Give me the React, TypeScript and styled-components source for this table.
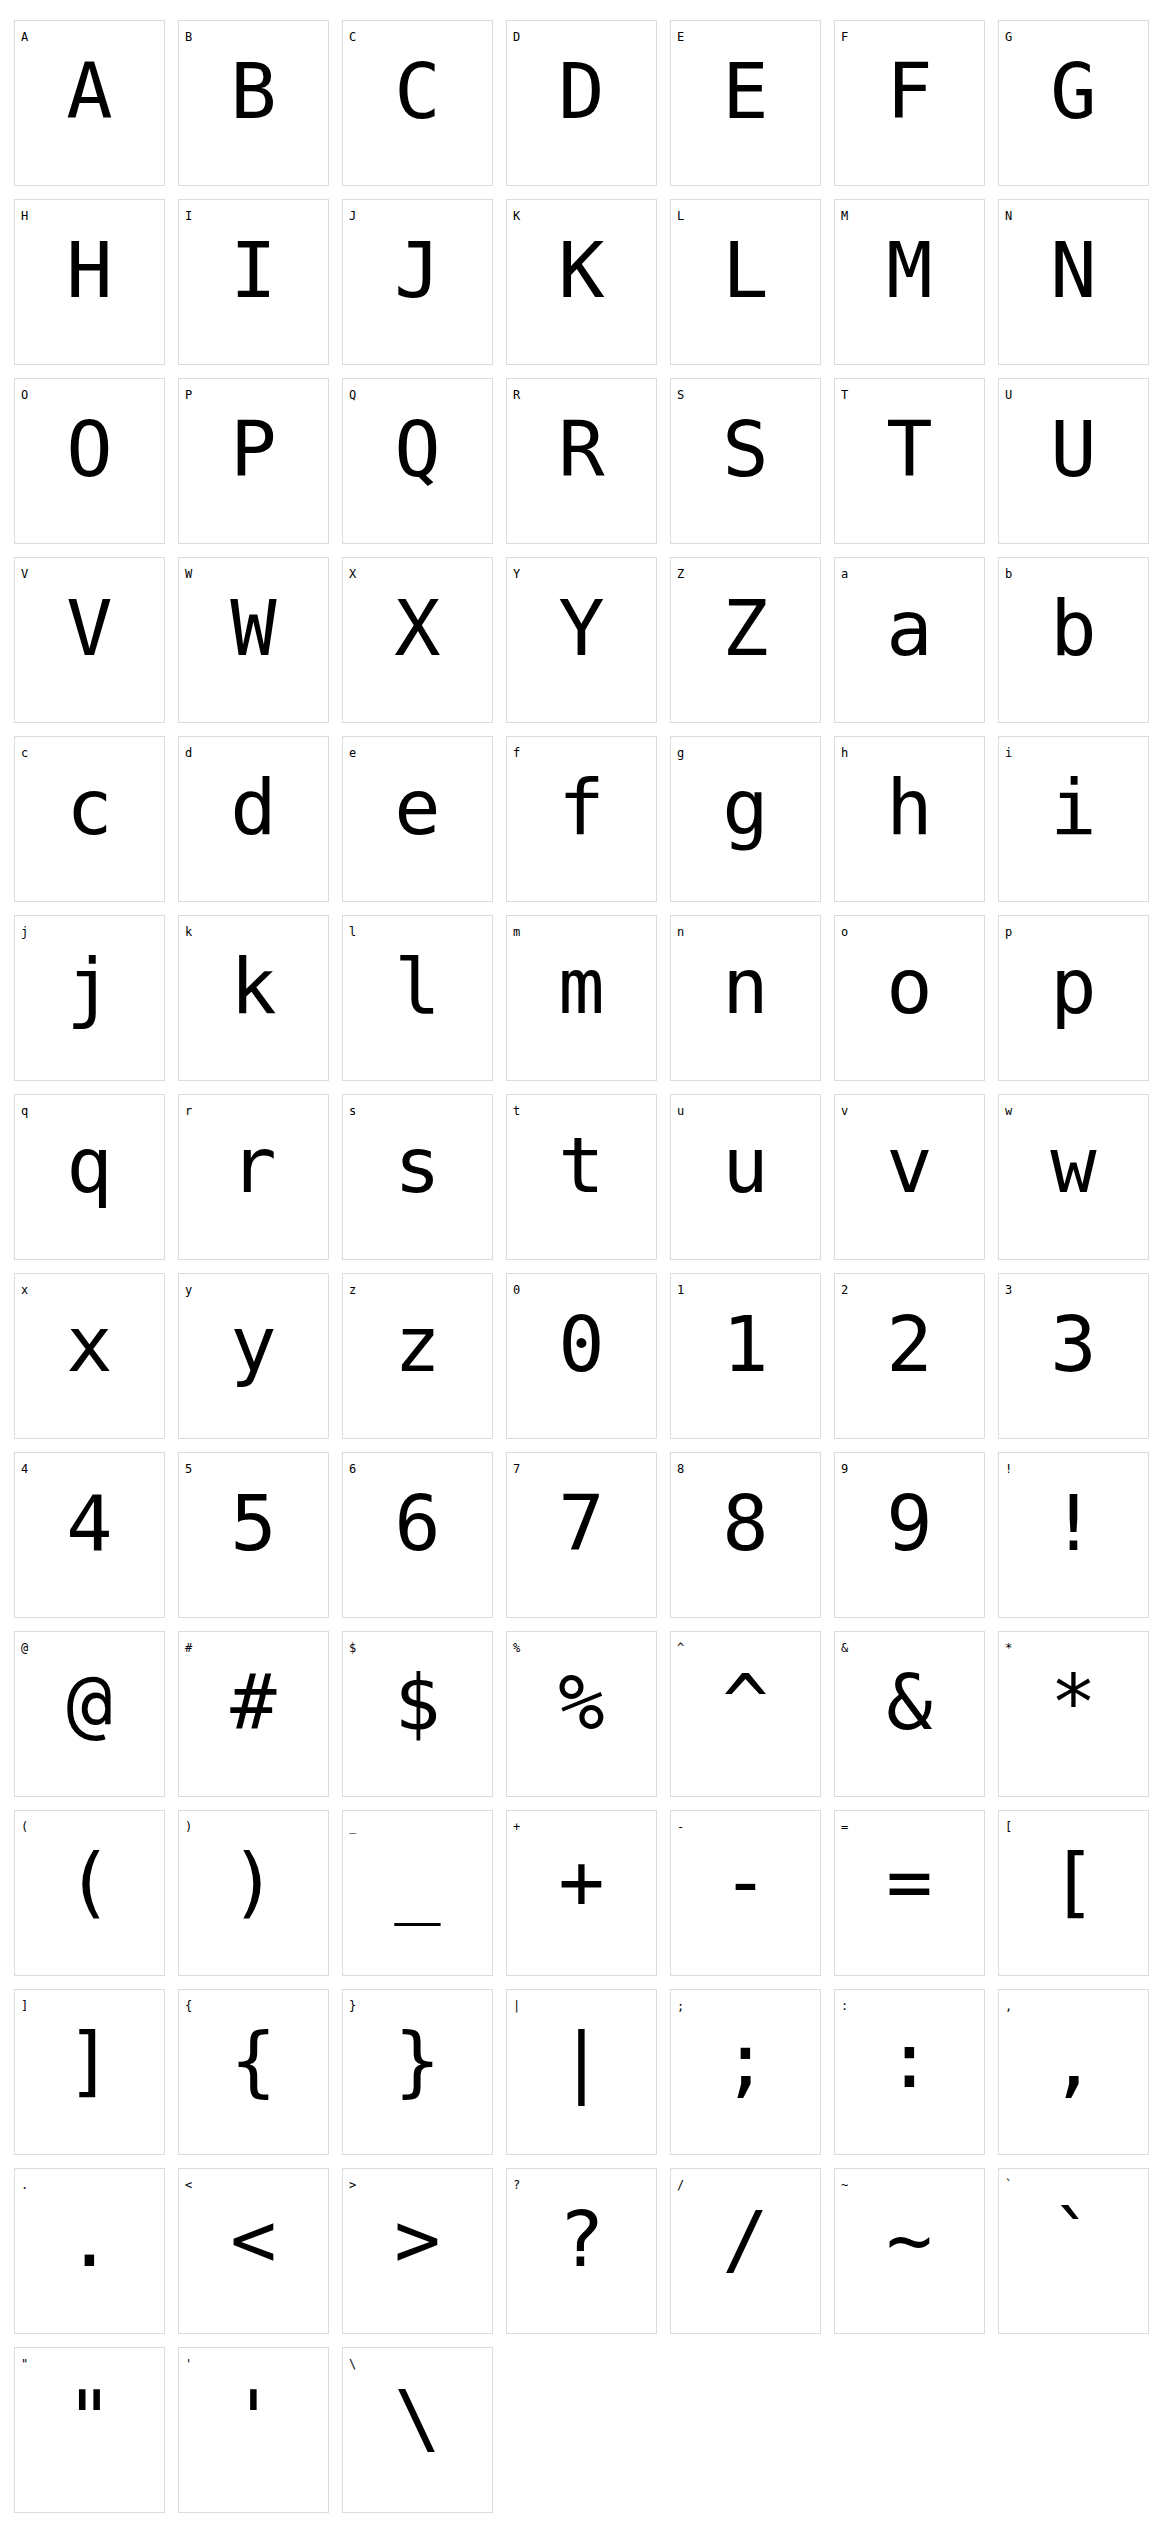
import React from "react";
import styled, { createGlobalStyle } from "styled-components";

const GlobalStyle = createGlobalStyle`
  body {
    margin: 0;
    background: #fff;
    font-family: "DejaVu Sans Mono", monospace;
  }
`;

const Grid = styled.div`
  display: grid;
  grid-template-columns: repeat(7, 151px);
  grid-auto-rows: 166px;
  column-gap: 13px;
  row-gap: 13px;
  padding: 20px 0 28px 14px;
`;

const Cell = styled.div`
  display: flex;
  flex-direction: column;
  box-sizing: border-box;
  border: 1px solid #dcdcdc;
  padding: 9px 6px;
  background: #fff;
`;

const Label = styled.div`
  font-family: "DejaVu Sans Mono", monospace;
  font-size: 12px;
  line-height: 14px;
  color: #000;
  height: 14px;
`;

const Glyph = styled.div`
  margin-top: 9px;
  font-family: "DejaVu Sans Mono", monospace;
  font-size: 77px;
  line-height: 1;
  text-align: center;
  color: #000;
`;

const chars = [
  ..."ABCDEFGHIJKLMNOPQRSTUVWXYZ",
  ..."abcdefghijklmnopqrstuvwxyz",
  ..."0123456789",
  ..."!@#$%^&*()_+-=[]{}|;:,.<>?/~`\"'\\",
];

const App = () => {
  return (
    <>
      <GlobalStyle />
      <Grid>
        {chars.map((c, i) => (
          <Cell key={i}>
            <Label>{c}</Label>
            <Glyph>{c}</Glyph>
          </Cell>
        ))}
      </Grid>
    </>
  );
};

export default App;
